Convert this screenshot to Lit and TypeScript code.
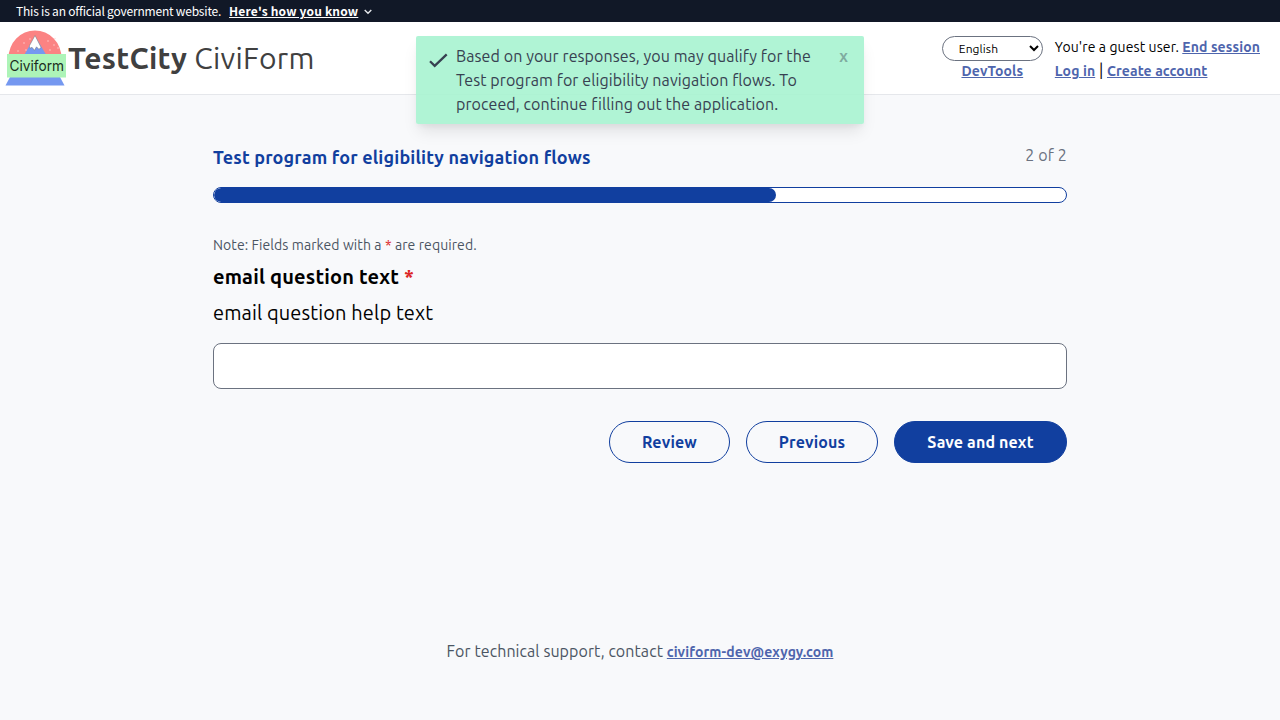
import { LitElement, html, css, svg } from "lit";
import { customElement, property } from "lit/decorators.js";

const snow: [number, number][] = [
  [20, 17], [26, 13], [14, 25], [22, 24], [44, 15], [50, 19], [54, 22], [46, 24], [51, 12.5],
];

@customElement("app-root")
export class AppRoot extends LitElement {
  @property({ type: Number }) progress = 66;

  static styles = css`
    :host {
      display: flex;
      flex-direction: column;
      position: relative;
      height: 720px;
      overflow: hidden;
      background: #f8f9fb;
      font-family: Ubuntu, "Noto Sans", sans-serif;
      font-size: 16px;
      line-height: 24px;
      color: #000;
      white-space: nowrap;
    }
    * { box-sizing: border-box; }
    a { color: #4e65ad; font-weight: 700; text-decoration: underline; }
    .gov {
      height: 22px;
      flex: none;
      display: flex;
      align-items: center;
      padding-left: 16px;
      background: #111827;
      color: #fff;
      font: 12px/16px "Source Sans Pro", "Noto Sans CJK SC", sans-serif;
      letter-spacing: -0.2px;
    }
    .gov-link { margin-left: 8px; font-weight: 700; text-decoration: underline; letter-spacing: 0.17px; }
    .gov-chevron { margin: 2px 0 0 6px; }
    .header {
      height: 73px;
      flex: none;
      display: flex;
      align-items: flex-start;
      background: #fff;
      border-bottom: 1px solid #e5e7eb;
    }
    .logo { margin: 4px 0 0 4px; flex: none; }
    .brand { margin-top: 18px; font-size: 30px; line-height: 36px; color: #404040; letter-spacing: 0.28px; }
    .account { margin-left: auto; display: flex; padding: 13px 20px 0 0; gap: 12px; font-size: 14px; letter-spacing: 0.1px; }
    .lang { display: flex; flex-direction: column; align-items: center; }
    .select {
      width: 101px;
      height: 25px;
      margin-top: 1px;
      padding: 0 0 0 12px;
      border: 1px solid #6b7280;
      border-radius: 13px;
      background: #fff;
      color: #000;
      font: 12px "Ubuntu", "Noto Sans", sans-serif;
      letter-spacing: 0.1px;
    }
    .dev { line-height: 20px; }
    .who { line-height: 24px; }
    .links { display: flex; align-items: baseline; gap: 3.700px; height: 24px; line-height: 23px; }
    .bar { font-size: 16px; }
    .toast {
      position: absolute;
      left: 416px;
      top: 36px;
      width: 448px;
      height: 88px;
      padding: 8px 16px 8px 12px;
      display: flex;
      border-radius: 2px;
      background: rgba(167, 243, 208, 0.9);
      color: #374151;
      letter-spacing: 0.09px;
      box-shadow: 0 10px 15px -3px rgba(0, 0, 0, 0.1), 0 4px 6px -2px rgba(0, 0, 0, 0.05);
    }
    .toast-icon { flex: none; margin: 7px 8px 0 0; }
    .close { margin-left: auto; font-weight: 700; opacity: 0.4; }
    .content { width: 854px; margin: 48px auto 0; }
    .title-row { display: flex; justify-content: space-between; height: 44px; }
    .title { font-size: 18px; line-height: 28px; font-weight: 700; color: #113f9f; letter-spacing: 0.155px; }
    .count { color: #6b7280; letter-spacing: 0.15px; }
    .track { height: 16px; border: 1px solid #113f9f; border-radius: 8px; background: #fff; overflow: hidden; }
    .fill { height: 14px; border-radius: 7px; background: #113f9f; }
    .note { margin-top: 32px; font-size: 14px; line-height: 20px; color: #4b5563; letter-spacing: 0.085px; }
    .req { color: #dc2626; }
    .question { margin-top: 8px; font-size: 20px; line-height: 28px; font-weight: 700; letter-spacing: 0.18px; }
    .help { margin-top: 8px; font-size: 20px; line-height: 28px; letter-spacing: 0.12px; }
    .field {
      display: block;
      width: 100%;
      height: 46px;
      margin-top: 16px;
      border: 1px solid #6b7280;
      border-radius: 8px;
      background: #fff;
    }
    .actions { display: flex; justify-content: flex-end; gap: 16px; margin-top: 32px; }
    .btn {
      height: 42px;
      padding: 0;
      border: 1px solid #113f9f;
      border-radius: 21px;
      background: transparent;
      color: #113f9f;
      font: inherit;
      font-weight: 700;
      letter-spacing: 0.13px;
      white-space: nowrap;
    }
    .review { width: 121px; }
    .previous { width: 132px; }
    .primary { width: 173px; background: #113f9f; color: #fff; }
    .footer { margin-top: 176px; text-align: center; color: #4b5563; letter-spacing: 0.08px; }
    .mail { font-size: 14px; letter-spacing: 0.1px; }
  `;

  render() {
    return html`
      <div class="gov">
        <span>This is an official government website.</span>
        <span class="gov-link">Here's how you know</span>
        <svg class="gov-chevron" width="8" height="6" viewBox="0 0 8 6" fill="none" stroke="#e5e7eb" stroke-width="1.4"><path d="M.7 1 4 4.3 7.3 1" /></svg>
      </div>
      <header class="header">
        <svg class="logo" width="64" height="64" viewBox="0 0 64 64">
          <path d="M4.5 32a26.5 27.5 0 0 1 53 0z" fill="#fb8383" />
          <path d="M20.500 28.500 31 10l11 18.500z" fill="#7598f0" />
          <path d="M31 9.500 25.300 20l.7 2.300 2-1 2.500 3 2-3.500 2.500 2.500 2-2z" fill="#fff" stroke="#777" stroke-width=".5" />
          ${snow.map(([x, y]) => svg`<circle cx=${x} cy=${y} r=".7" fill="#ffd5d5" />`)}
          <path d="M6 51h50l4.500 8.500H1.500z" fill="#7598f0" />
          <path d="M3 28h59v23.500H3z" fill="#adf4b8" />
          <text x="5.500" y="45.300" font-family="Inter, Roboto, sans-serif" font-size="14.500" textLength="54.500" lengthAdjust="spacingAndGlyphs" fill="#1c2d21">Civiform</text>
        </svg>
        <div class="brand"><b>TestCity</b> CiviForm</div>
        <div class="account">
          <div class="lang">
            <select class="select"><option>English</option></select>
            <a class="dev">DevTools</a>
          </div>
          <div class="who">
            <div>You're a guest user. <a>End session</a></div>
            <div class="links"><a>Log in</a><span class="bar">|</span><a>Create account</a></div>
          </div>
        </div>
      </header>
      <main class="content">
        <div class="title-row">
          <div class="title">Test program for eligibility navigation flows</div>
          <div class="count">2 of 2</div>
        </div>
        <div class="track"><div class="fill" style="width:${this.progress}%"></div></div>
        <div class="note">Note: Fields marked with a <span class="req">*</span> are required.</div>
        <div class="question">email question text <span class="req">*</span></div>
        <div class="help">email question help text</div>
        <input class="field" type="email" />
        <div class="actions">
          <button class="btn review">Review</button>
          <button class="btn previous">Previous</button>
          <button class="btn primary">Save and next</button>
        </div>
      </main>
      <footer class="footer"><span>For technical support, contact</span> <a class="mail">civiform-dev@exygy.com</a></footer>
      <div class="toast">
        <svg class="toast-icon" width="20" height="20" viewBox="0 0 20 20" fill="none" stroke="#374151" stroke-width="2.300"><path d="M2 10.200 6.700 14.800 18.700 3.300" /></svg>
        <div>Based on your responses, you may qualify for the<br />Test program for eligibility navigation flows. To<br />proceed, continue filling out the application.</div>
        <div class="close">x</div>
      </div>
    `;
  }
}
